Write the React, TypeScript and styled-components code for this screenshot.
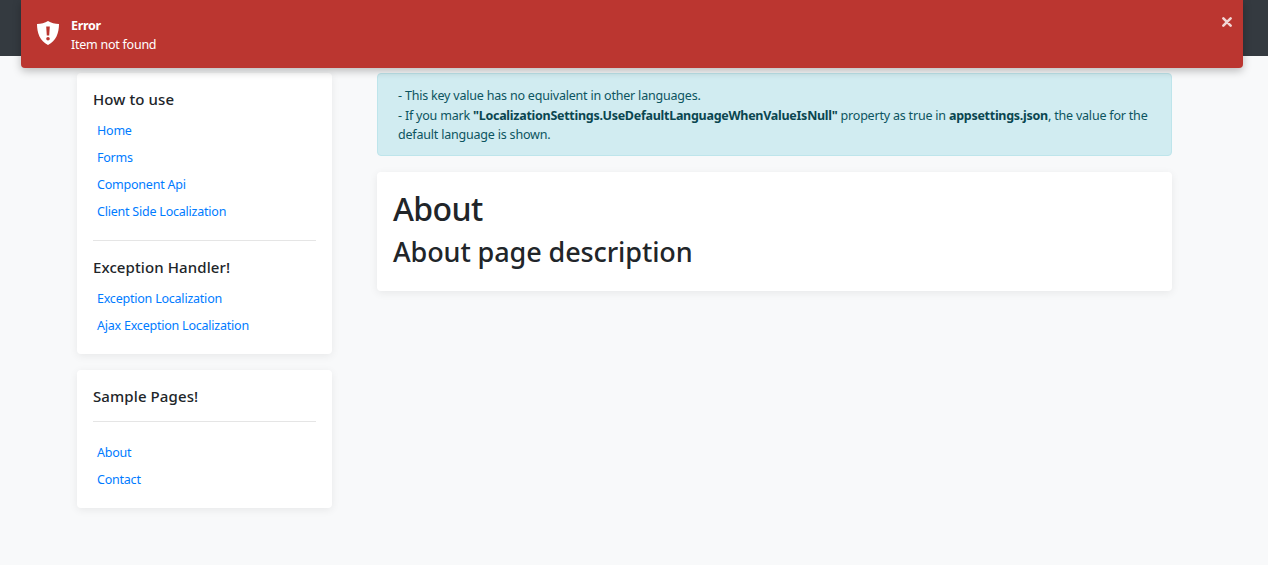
import React from "react";
import styled, { createGlobalStyle } from "styled-components";

const Global = createGlobalStyle`
  html, body { margin: 0; padding: 0; height: 100%; }
  body { background: #f8f9fa; font-family: "Noto Sans", "Open Sans", sans-serif; color: #212529; overflow: hidden; }
`;
const Page = styled.div`position: relative; width: 1268px; height: 565px; overflow: hidden;`;
const TopBar = styled.header`height: 56px; background: #343a40;`;
const Layout = styled.div`display: flex; gap: 45px; padding: 17px 0 0 77px;`;
const Sidebar = styled.aside`width: 255px; display: flex; flex-direction: column; gap: 16px;`;
const Content = styled.main`width: 795px; display: flex; flex-direction: column; gap: 16px;`;
const Card = styled.section`
  background: #fff; border-radius: 4px; box-shadow: 0 2px 8px rgba(0,0,0,.07); padding: 16px 16px 15px;
`;
const MenuTitle = styled.h5`
  margin: 0 0 7px; font-size: 15px; line-height: 21px; font-weight: 500; letter-spacing: .1px;
`;
const Divider = styled.hr<{ $before: number; $after: number }>`
  border: 0; border-top: 1px solid #e5e5e5; margin: ${p => p.$before}px 0 ${p => p.$after}px;
`;
const Menu = styled.ul`list-style: none; margin: 0; padding: 0;`;
const MenuLink = styled.a`
  display: block; height: 27px; line-height: 27px; padding-left: 4px; font-size: 12.5px;
  color: #007bff; letter-spacing: -.22px;
`;
const Notice = styled.div`
  background: #d1ecf1; border: 1px solid #bee5eb; border-radius: 4px; color: #0c5460;
  padding: 12px 20px; font-size: 12.5px; line-height: 19.5px; letter-spacing: -.2px; height: 83px; box-sizing: border-box;
  strong { color: #0a4650; font-weight: 700; letter-spacing: -.27px; }
`;
const AboutCard = styled(Card)`padding: 17px 16px 16px; height: 119px; box-sizing: border-box;`;
const Title = styled.h1`margin: 0 0 7px; font-size: 32px; line-height: 40px; font-weight: 500; letter-spacing: -.6px;`;
const Subtitle = styled.h2`margin: 0; font-size: 27px; line-height: 32px; font-weight: 500; letter-spacing: -.1px;`;
const Toast = styled.div`
  position: absolute; left: 21px; top: 0; width: 1222px; height: 68px; box-sizing: border-box;
  background: #bb3630; border-radius: 0 0 4px 4px; box-shadow: 0 3px 8px rgba(0,0,0,.25);
  display: flex; align-items: center; padding: 2px 16px 0 15px; color: #fff;
`;
const ShieldIcon = styled.svg`width: 24px; height: 26px; margin-right: 11px; flex: none; margin-top: -4px;`;
const ToastBody = styled.div`flex: 1; font-size: 12.5px; line-height: 19px; letter-spacing: -.25px;`;
const ToastTitle = styled.div`font-weight: 700; letter-spacing: -.3px;`;
const Close = styled.svg`position: absolute; right: 11px; top: 17px; width: 10px; height: 10px; opacity: .8;`;

export default function App() {
  return (
    <Page>
      <Global />
      <TopBar />
      <Layout>
        <Sidebar>
          <Card>
            <MenuTitle>How to use</MenuTitle>
            <Menu>
              {["Home", "Forms", "Component Api", "Client Side Localization"].map(t => (
                <li key={t}><MenuLink>{t}</MenuLink></li>
              ))}
            </Menu>
            <Divider $before={15} $after={16} />
            <MenuTitle>Exception Handler!</MenuTitle>
            <Menu>
              {["Exception Localization", "Ajax Exception Localization"].map(t => (
                <li key={t}><MenuLink>{t}</MenuLink></li>
              ))}
            </Menu>
          </Card>
          <Card>
            <MenuTitle>Sample Pages!</MenuTitle>
            <Divider $before={14} $after={17} />
            <Menu>
              {["About", "Contact"].map(t => (
                <li key={t}><MenuLink>{t}</MenuLink></li>
              ))}
            </Menu>
          </Card>
        </Sidebar>
        <Content>
          <Notice>
            - This key value has no equivalent in other languages.<br />
            - If you mark <strong>"LocalizationSettings.UseDefaultLanguageWhenValueIsNull"</strong> property as true in <strong>appsettings.json</strong>, the value for the default language is shown.
          </Notice>
          <AboutCard>
            <Title>About</Title>
            <Subtitle>About page description</Subtitle>
          </AboutCard>
        </Content>
      </Layout>
      <Toast>
        <ShieldIcon viewBox="0 0 24 26">
          <path fillRule="evenodd" fill="#fff" d="M12 1 C15 3 19 4 23 4 C23 13 20 21 12 25 C4 21 1 13 1 4 C5 4 9 3 12 1 Z M10.2 6.5 L10.8 15.5 H13.2 L13.8 6.5 Z M12 17 A1.8 1.8 0 1 0 12 20.6 A1.8 1.8 0 1 0 12 17 Z" />
        </ShieldIcon>
        <ToastBody>
          <ToastTitle>Error</ToastTitle>
          <div>Item not found</div>
        </ToastBody>
        <Close viewBox="0 0 11 11">
          <path d="M1.5 1.5 L9.5 9.5 M9.5 1.5 L1.5 9.5" stroke="#fff" strokeWidth="2.8" strokeLinecap="round" />
        </Close>
      </Toast>
    </Page>
  );
}
